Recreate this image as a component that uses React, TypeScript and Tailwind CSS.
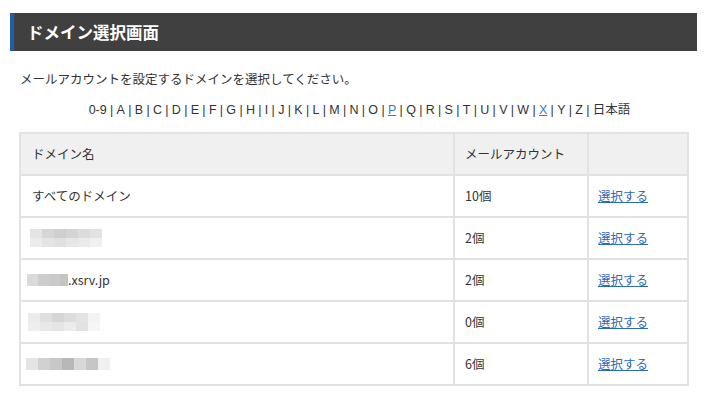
const letters = ["0-9", "A", "B", "C", "D", "E", "F", "G", "H", "I", "J", "K", "L", "M", "N", "O", "P", "Q", "R", "S", "T", "U", "V", "W", "X", "Y", "Z", "日本語"];
const linked = ["P", "X"];

const rows = [
  { name: "all", count: "10個" },
  { name: "blur1", count: "2個" },
  { name: "xsrv", count: "2個" },
  { name: "blur2", count: "0個" },
  { name: "blur3", count: "6個" },
];

function Mosaic({ cells }: { cells: string[][] }) {
  return (
    <div className="flex flex-col">
      {cells.map((row, i) => (
        <div key={i} className="flex">
          {row.map((c, j) => (
            <div key={j} className="w-[12px] h-[9px]" style={{ backgroundColor: c }} />
          ))}
        </div>
      ))}
    </div>
  );
}

function DomainCell({ name }: { name: string }) {
  if (name === "all") return <span>すべてのドメイン</span>;
  if (name === "blur1")
    return (
      <div className="ml-[-2px]">
        <Mosaic
          cells={[
            ["#e4e4e4", "#d6d6d6", "#cfcfcf", "#d4d4d4", "#dcdcdc", "#e2e2e2"],
            ["#ececec", "#e4e4e4", "#e0e0e0", "#e6e6e6", "#eaeaea", "#f0f0f0"],
          ]}
        />
      </div>
    );
  if (name === "xsrv")
    return (
      <div className="flex items-center ml-[-5px]">
        <div className="flex">
          <div className="w-[11px] h-[12px] bg-[#dadada]" />
          <div className="w-[11px] h-[12px] bg-[#cdcdcd]" />
          <div className="w-[11px] h-[12px] bg-[#c9c9c9]" />
          <div className="w-[8px] h-[12px] bg-[#c4c4c4]" />
        </div>
        <span>.xsrv.jp</span>
      </div>
    );
  if (name === "blur2")
    return (
      <div className="ml-[-4px]">
        <Mosaic
          cells={[
            ["#ebebeb", "#dfdfdf", "#d6d6d6", "#dddddd", "#e4e4e4", "#f3f3f3"],
            ["#eeeeee", "#e8e8e8", "#e5e5e5", "#ececec", "#e2e2e2", "#f6f6f6"],
          ]}
        />
      </div>
    );
  return (
    <div className="ml-[-6px] flex">
      {["#e4e4e4", "#d3d1d0", "#c8c8c8", "#b8b8b8", "#d8d8d8", "#c6c6c6", "#f0f0f0"].map((c, i) => (
        <div key={i} className="w-[12px] h-[12px]" style={{ backgroundColor: c }} />
      ))}
    </div>
  );
}

export default function App() {
  return (
    <div className="w-[710px] h-[398px] bg-white pt-[13px] font-['Noto_Sans_CJK_JP','Noto_Sans',sans-serif] text-[#333]">
      <div className="ml-[10px] w-[687px] h-[38px] bg-[#404040] border-l-[4px] border-[#1f5ea8] flex items-center pl-[13px]">
        <h1 className="text-white font-bold text-[16.5px] leading-none">ドメイン選択画面</h1>
      </div>

      <p className="ml-[20px] mt-[19px] text-[12.5px] leading-[17px]">
        メールアカウントを設定するドメインを選択してください。
      </p>

      <div className="flex justify-center ml-[9px] mt-[15px] text-[12.5px] leading-[16px] font-['Liberation_Sans','Noto_Sans_CJK_JP',sans-serif]">
        {letters.map((l, i) => (
          <span key={l} className="flex">
            {linked.includes(l) ? (
              <span className="text-[#3a7bc8] underline">{l}</span>
            ) : (
              <span>{l}</span>
            )}
            {i < letters.length - 1 && <span className="px-[3.3px]">|</span>}
          </span>
        ))}
      </div>

      <table className="ml-[19px] mt-[14px] w-[668px] border-collapse text-[12.5px] table-fixed">
        <colgroup>
          <col className="w-[434px]" />
          <col className="w-[134px]" />
          <col className="w-[100px]" />
        </colgroup>
        <thead>
          <tr className="h-[42px] bg-[#f0f0f0]">
            <th className="border-2 border-[#e2e2e2] text-left font-normal pl-[11px]">ドメイン名</th>
            <th className="border-2 border-[#e2e2e2] text-left font-normal pl-[10px]">メールアカウント</th>
            <th className="border-2 border-[#e2e2e2]"></th>
          </tr>
        </thead>
        <tbody>
          {rows.map((r) => (
            <tr key={r.name} className="h-[42px]">
              <td className="border-2 border-[#e2e2e2] pl-[11px]">
                <DomainCell name={r.name} />
              </td>
              <td className="border-2 border-[#e2e2e2] pl-[10px]">{r.count}</td>
              <td className="border-2 border-[#e2e2e2] pl-[9px]">
                <a href="#" className="text-[#2a6bb8] underline">選択する</a>
              </td>
            </tr>
          ))}
        </tbody>
      </table>
    </div>
  );
}
